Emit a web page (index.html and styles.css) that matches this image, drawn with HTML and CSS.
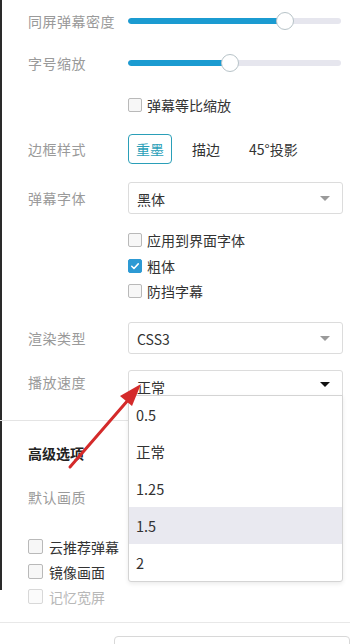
FILE: index.html
```html
<!DOCTYPE html>
<html lang="zh-CN">
<head>
  <meta charset="UTF-8" />
  <meta name="viewport" content="width=device-width, initial-scale=1.0" />
  <title>播放设置</title>
  <link rel="stylesheet" href="styles.css">
</head>
<body>
  <div class="pl-page">
    <div class="pl-settings">
      <div class="pl-row pl-row-slider">
        <div class="pl-label">同屏弹幕密度</div>
        <div class="pl-slider">
          <div class="pl-track"><div class="pl-fill" style="width: 73.7%"></div></div>
          <span class="pl-thumb" style="left: 73.7%"></span>
        </div>
      </div>
      <div class="pl-row pl-row-slider">
        <div class="pl-label">字号缩放</div>
        <div class="pl-slider">
          <div class="pl-track"><div class="pl-fill" style="width: 48%"></div></div>
          <span class="pl-thumb" style="left: 48%"></span>
        </div>
      </div>

      <div class="pl-checks pl-checks-scale">
        <label class="pl-check"><span class="pl-box"></span>弹幕等比缩放</label>
      </div>

      <div class="pl-row pl-row-border">
        <div class="pl-label">边框样式</div>
        <div class="pl-tabs">
          <span class="pl-tab active">重墨</span>
          <span class="pl-tab">描边</span>
          <span class="pl-tab">45°投影</span>
        </div>
      </div>

      <div class="pl-row pl-row-select">
        <div class="pl-label">弹幕字体</div>
        <div class="pl-select">黑体<span class="pl-caret"></span></div>
      </div>

      <div class="pl-checks pl-checks-font">
        <label class="pl-check"><span class="pl-box"></span>应用到界面字体</label>
        <label class="pl-check"><span class="pl-box checked"><svg viewBox="0 0 14 14" width="14" height="14"><path d="M3.2 7.3l2.6 2.6 5-5.4" fill="none" stroke="#fff" stroke-width="1.8" stroke-linecap="round" stroke-linejoin="round"/></svg></span>粗体</label>
        <label class="pl-check"><span class="pl-box"></span>防挡字幕</label>
      </div>

      <div class="pl-row pl-row-select pl-row-render">
        <div class="pl-label">渲染类型</div>
        <div class="pl-select">CSS3<span class="pl-caret"></span></div>
      </div>

      <div class="pl-row pl-row-speed">
        <div class="pl-label">播放速度</div>
        <div class="pl-dropdown">
          <div class="pl-select open">正常<span class="pl-caret dark"></span></div>
          <ul class="pl-menu">
            <li>0.5</li>
            <li>正常</li>
            <li>1.25</li>
            <li class="hover">1.5</li>
            <li>2</li>
          </ul>
        </div>
      </div>

      <div class="pl-advanced">
        <h3 class="pl-title">高级选项</h3>
        <div class="pl-row pl-row-quality">
          <div class="pl-label">默认画质</div>
        </div>
        <div class="pl-checks pl-checks-adv">
          <label class="pl-check"><span class="pl-box"></span>云推荐弹幕</label>
          <label class="pl-check"><span class="pl-box"></span>镜像画面</label>
          <label class="pl-check disabled"><span class="pl-box"></span>记忆宽屏</label>
        </div>
      </div>
    </div>

    <div class="pl-footer">
      <div class="pl-input"></div>
    </div>

    <!-- annotation arrow drawn over the screenshot -->
    <svg class="pl-arrow" width="350" height="644" viewBox="0 0 350 644">
      <line x1="70" y1="467" x2="129" y2="399" stroke="#d42a2a" stroke-width="3" stroke-linecap="round"/>
      <path d="M141 384 L120 396 L132 406 Z" fill="#d42a2a"/>
    </svg>
  </div>
</body>
</html>
```

FILE: styles.css
```css
:root {
  --label: #9a9a9a;
  --text: #333;
  --line: #dcdcdc;
  --blue: #1b9bd1;
  --teal: #2a9fb8;
}

* {
  margin: 0;
  padding: 0;
  box-sizing: border-box;
}

body {
  font-family: "Noto Sans CJK SC", "Noto Sans", sans-serif;
  font-size: 14px;
  color: var(--text);
  background: #fff;
  width: 350px;
  height: 644px;
  overflow: hidden;
}

.pl-page {
  position: relative;
  height: 644px;
}

.pl-settings {
  height: 590px;
  border-left: 2px solid #2a2a2a;
  padding-left: 26px;
  padding-right: 7px;
}

.pl-row {
  display: flex;
  align-items: center;
}

.pl-label {
  width: 100px;
  flex-shrink: 0;
  color: var(--label);
  letter-spacing: 0.5px;
}

/* sliders */
.pl-row-slider {
  height: 42px;
}

.pl-slider {
  position: relative;
  flex: 1;
  height: 20px;
  display: flex;
  align-items: center;
  margin-right: 2px;
}

.pl-track {
  width: 100%;
  height: 6px;
  border-radius: 3px;
  background: #e6e6ee;
  overflow: hidden;
}

.pl-fill {
  height: 100%;
  background: var(--blue);
  border-radius: 3px;
}

.pl-thumb {
  position: absolute;
  top: 1px;
  width: 18px;
  height: 18px;
  margin-left: -9px;
  border-radius: 50%;
  background: #fff;
  border: 1px solid #b7c3c8;
}

/* checkboxes */
.pl-checks {
  display: flex;
  flex-direction: column;
  padding-left: 100px;
}

.pl-checks-scale {
  margin-top: 8px;
}

.pl-check {
  display: flex;
  align-items: center;
  height: 25.5px;
  gap: 5px;
  color: var(--text);
}

.pl-box {
  width: 14px;
  height: 14px;
  border: 1px solid #b9b9b9;
  border-radius: 2px;
  background: #f7f7f7;
  display: flex;
  align-items: center;
  justify-content: center;
}

.pl-box.checked {
  background: #2d9ad4;
  border-color: #2d9ad4;
}

.pl-check.disabled {
  color: #b8b8b8;
}

.pl-check.disabled .pl-box {
  border-color: #d8d8d8;
  background: #fbfbfb;
}

/* border style */
.pl-row-border {
  margin-top: 16px;
  height: 30px;
}

.pl-tabs {
  display: flex;
  align-items: center;
}

.pl-tab {
  height: 30px;
  line-height: 28px;
  padding: 0 7px;
  border: 1px solid transparent;
  border-radius: 4px;
  margin-right: 13px;
}

.pl-tab.active {
  color: var(--teal);
  border-color: var(--teal);
  margin-right: 12px;
}

/* selects */
.pl-row-select {
  margin-top: 18px;
  height: 32px;
}

.pl-select {
  position: relative;
  flex: 1;
  height: 32px;
  line-height: 32px;
  padding-left: 8px;
  border: 1px solid var(--line);
  border-radius: 3px;
  background: #fff;
}

.pl-caret {
  position: absolute;
  right: 12px;
  top: 13px;
  width: 0;
  height: 0;
  border-left: 5px solid transparent;
  border-right: 5px solid transparent;
  border-top: 5px solid #9a9a9a;
}

.pl-caret.dark {
  border-top-color: #111;
  top: 11px;
}

.pl-checks-font {
  margin-top: 14px;
}

.pl-row-render {
  margin-top: 18px;
}

/* speed dropdown */
.pl-row-speed {
  margin-top: 16px;
  height: 26px;
  align-items: flex-start;
}

.pl-row-speed .pl-label {
  padding-top: 2px;
}

.pl-dropdown {
  position: relative;
  flex: 1;
}

.pl-select.open {
  height: 30px;
  line-height: 32px;
  border-radius: 3px 3px 0 0;
}

.pl-menu {
  position: absolute;
  z-index: 2;
  top: 25px;
  left: 0;
  right: 0;
  list-style: none;
  background: #fff;
  border: 1px solid #d4d4d4;
  border-radius: 0 0 3px 3px;
  box-shadow: 0 2px 4px rgba(0, 0, 0, 0.08);
}

.pl-menu li {
  height: 37px;
  line-height: 37px;
  padding-left: 7px;
  font-size: 14.5px;
}

.pl-menu li.hover {
  background: #e9e9f0;
}

/* advanced */
.pl-advanced {
  margin-top: 24px;
  margin-left: -28px;
  padding-left: 28px;
  border-top: 1px solid #e4e4e4;
}

.pl-title {
  font-size: 14px;
  font-weight: 700;
  color: #222;
  height: 24px;
  line-height: 24px;
  margin-top: 20px;
}

.pl-row-quality {
  height: 24px;
  margin-top: 20px;
}

.pl-checks-adv {
  padding-left: 0;
  margin-top: 25px;
}

.pl-checks-adv .pl-check {
  height: 25px;
  gap: 6px;
}

.pl-checks-adv .pl-box {
  width: 15px;
  height: 15px;
}

/* footer */
.pl-footer {
  margin-top: 32px;
  border-top: 1px solid #e8e8e8;
  padding-top: 13px;
  padding-left: 114px;
}

.pl-input {
  height: 30px;
  border: 1px solid #d8d8d8;
  border-radius: 4px;
}

.pl-arrow {
  position: absolute;
  top: 0;
  left: 0;
  z-index: 3;
  pointer-events: none;
}
```
